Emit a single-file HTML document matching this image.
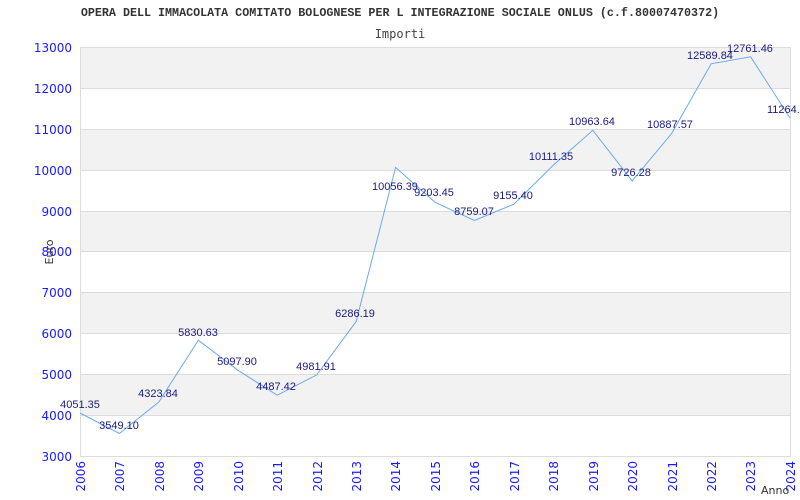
<!DOCTYPE html>
<html><head><meta charset="utf-8"><style>
html,body{margin:0;padding:0;background:#fff;width:800px;height:500px;overflow:hidden}
</style></head><body>
<svg width="800" height="500" xmlns="http://www.w3.org/2000/svg">
<text x="400" y="16" text-anchor="middle" font-family="Liberation Mono, monospace" font-weight="bold" font-size="11.7" fill="#333">OPERA DELL IMMACOLATA COMITATO BOLOGNESE PER L INTEGRAZIONE SOCIALE ONLUS (c.f.80007470372)</text>
<text x="400" y="38" text-anchor="middle" font-family="DejaVu Sans Mono, monospace" font-size="12" fill="#444">Importi</text>
<g fill="#f2f2f2">
<rect x="80.5" y="47" width="710" height="41"/>
<rect x="80.5" y="129" width="710" height="41"/>
<rect x="80.5" y="211" width="710" height="40"/>
<rect x="80.5" y="292" width="710" height="41"/>
<rect x="80.5" y="374" width="710" height="41"/>
</g>
<g stroke="#dcdcdc" stroke-width="1">
<line x1="80" y1="47.5" x2="790" y2="47.5"/><line x1="80" y1="88.5" x2="790" y2="88.5"/>
<line x1="80" y1="129.5" x2="790" y2="129.5"/><line x1="80" y1="170.5" x2="790" y2="170.5"/>
<line x1="80" y1="211.5" x2="790" y2="211.5"/><line x1="80" y1="251.5" x2="790" y2="251.5"/>
<line x1="80" y1="292.5" x2="790" y2="292.5"/><line x1="80" y1="333.5" x2="790" y2="333.5"/>
<line x1="80" y1="374.5" x2="790" y2="374.5"/><line x1="80" y1="415.5" x2="790" y2="415.5"/>
<line x1="80" y1="456.5" x2="790" y2="456.5"/>
<line x1="80.5" y1="47" x2="80.5" y2="457"/><line x1="790.5" y1="47" x2="790.5" y2="457"/>
</g>
<g font-family="DejaVu Sans, sans-serif" font-size="12" fill="#1a1aff" text-anchor="end">
<text x="72" y="52">13000</text><text x="72" y="93">12000</text><text x="72" y="134">11000</text>
<text x="72" y="175">10000</text><text x="72" y="216">9000</text><text x="72" y="256">8000</text>
<text x="72" y="297">7000</text><text x="72" y="338">6000</text><text x="72" y="379">5000</text>
<text x="72" y="420">4000</text><text x="72" y="461">3000</text>
</g>
<text transform="translate(53,252) rotate(-90)" text-anchor="middle" font-family="DejaVu Sans, sans-serif" font-size="11" fill="#333">Euro</text>
<g font-family="DejaVu Sans, sans-serif" font-size="12" fill="#1a1aff" text-anchor="end">
<text transform="translate(85,461) rotate(-90)">2006</text>
<text transform="translate(124,461) rotate(-90)">2007</text>
<text transform="translate(164,461) rotate(-90)">2008</text>
<text transform="translate(203,461) rotate(-90)">2009</text>
<text transform="translate(243,461) rotate(-90)">2010</text>
<text transform="translate(282,461) rotate(-90)">2011</text>
<text transform="translate(322,461) rotate(-90)">2012</text>
<text transform="translate(361,461) rotate(-90)">2013</text>
<text transform="translate(400,461) rotate(-90)">2014</text>
<text transform="translate(440,461) rotate(-90)">2015</text>
<text transform="translate(479,461) rotate(-90)">2016</text>
<text transform="translate(519,461) rotate(-90)">2017</text>
<text transform="translate(558,461) rotate(-90)">2018</text>
<text transform="translate(598,461) rotate(-90)">2019</text>
<text transform="translate(637,461) rotate(-90)">2020</text>
<text transform="translate(677,461) rotate(-90)">2021</text>
<text transform="translate(716,461) rotate(-90)">2022</text>
<text transform="translate(755,461) rotate(-90)">2023</text>
<text transform="translate(795,461) rotate(-90)">2024</text>
</g>
<text x="761" y="494" font-family="DejaVu Sans, sans-serif" font-size="11" fill="#333">Anno</text>
<polyline fill="none" stroke="#6aaaf0" stroke-width="1" points="80,413 119.4,433.5 158.9,401.9 198.3,340.2 237.8,370.2 277.2,395.2 316.7,374.9 356.1,321.6 395.6,167.4 435,202.3 474.4,220.5 513.9,204.2 553.3,165.1 592.8,130.3 632.2,180.9 671.7,133.4 711.1,63.8 750.6,56.8 790,118"/>
<g font-family="Liberation Sans, sans-serif" font-size="11" fill="#1a1a80" text-anchor="middle">
<text x="80" y="408">4051.35</text><text x="119" y="429">3549.10</text>
<text x="158" y="397">4323.84</text><text x="198" y="336">5830.63</text>
<text x="237" y="365">5097.90</text><text x="276" y="390">4487.42</text>
<text x="316" y="370">4981.91</text><text x="355" y="317">6286.19</text>
<text x="395" y="190">10056.39</text><text x="434" y="196">9203.45</text>
<text x="474" y="215">8759.07</text><text x="513" y="199">9155.40</text>
<text x="551" y="160">10111.35</text><text x="592" y="125">10963.64</text>
<text x="631" y="176">9726.28</text><text x="670" y="128">10887.57</text>
<text x="710" y="59">12589.84</text><text x="750" y="52">12761.46</text>
<text x="767" y="113" text-anchor="start">11264.</text>
</g>
</svg>
</body></html>
